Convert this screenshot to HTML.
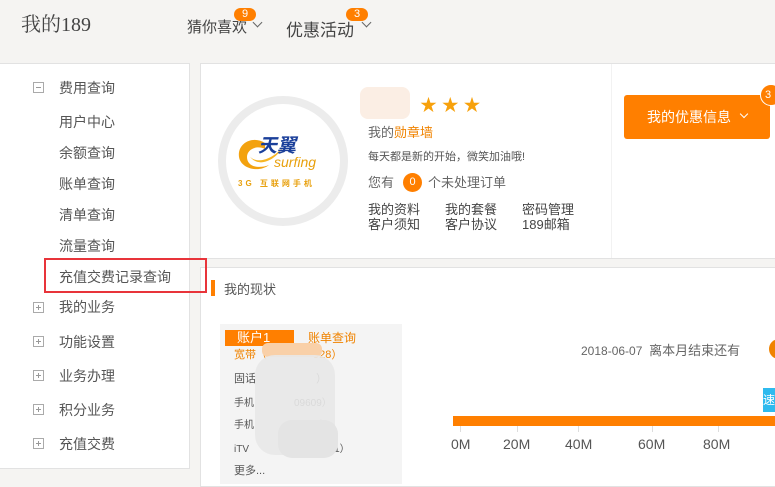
<!DOCTYPE html>
<html><head><meta charset="utf-8">
<style>
*{margin:0;padding:0;box-sizing:border-box}
body{width:775px;height:479px;overflow:hidden;background:#f5f4f2;font-family:"Liberation Sans","Noto Sans CJK SC",sans-serif;color:#555;position:relative;font-size:14px}
.a{position:absolute;white-space:nowrap}
.box{position:absolute;background:#fff;border:1px solid #e2e2e2}
.pm{position:absolute;width:11px;height:11px;border:1px solid #aaa;left:33px}
.pm:before{content:"";position:absolute;left:2px;right:2px;top:4px;height:1px;background:#999}
.pm.p:after{content:"";position:absolute;top:2px;bottom:2px;left:4px;width:1px;background:#999}
.badge{position:absolute;background:#ff7f00;color:#fff;font-size:11px;border-radius:8px;text-align:center;height:13px;line-height:13px;width:22px}
.chev{position:absolute;width:7px;height:7px;border-right:1.5px solid #666;border-bottom:1.5px solid #666;transform:rotate(45deg)}
.star{color:#f7a10c;font-size:17px}
</style></head><body>
<div class="a" style="left:21px;top:8px;font-size:20px;color:#444;font-family:'Liberation Serif','Noto Serif CJK SC',serif">我的189</div>
<div class="a" style="left:187px;top:16px;font-size:15px;color:#444">猜你喜欢</div>
<div class="badge" style="left:234px;top:8px">9</div>
<div class="chev" style="left:254px;top:19px"></div>
<div class="a" style="left:286px;top:16px;font-size:17px;color:#444">优惠活动</div>
<div class="badge" style="left:346px;top:8px">3</div>
<div class="chev" style="left:363px;top:19px"></div>

<div class="box" style="left:-1px;top:63px;width:191px;height:406px"></div>
<div class="pm" style="top:82px"></div>
<div class="a" style="left:59px;top:78px">费用查询</div>
<div class="a" style="left:59px;top:112px">用户中心</div>
<div class="a" style="left:59px;top:143px">余额查询</div>
<div class="a" style="left:59px;top:174px">账单查询</div>
<div class="a" style="left:59px;top:205px">清单查询</div>
<div class="a" style="left:59px;top:236px">流量查询</div>
<div class="a" style="left:59px;top:267px">充值交费记录查询</div>
<div class="pm p" style="top:302px"></div><div class="a" style="left:59px;top:297px">我的业务</div>
<div class="pm p" style="top:336px"></div><div class="a" style="left:59px;top:332px">功能设置</div>
<div class="pm p" style="top:370px"></div><div class="a" style="left:59px;top:366px">业务办理</div>
<div class="pm p" style="top:404px"></div><div class="a" style="left:59px;top:400px">积分业务</div>
<div class="pm p" style="top:438px"></div><div class="a" style="left:59px;top:434px">充值交费</div>

<div class="box" style="left:200px;top:63px;width:590px;height:196px"></div>
<div class="a" style="left:611px;top:64px;width:1px;height:194px;background:#f2f2f2"></div>
<div class="a" style="left:218px;top:96px;width:130px;height:130px;border-radius:50%;border:8px solid #ececec;background:#fff"></div>
<svg class="a" style="left:235px;top:135px" width="50" height="40" viewBox="0 0 50 40"><path d="M30 8C18 0 2 8 4 22c2 12 20 16 30 8-10 4-22 2-22-8 0-8 10-12 18-8z" fill="#f3a20f"/><path d="M14 20c4 8 20 8 34-8-8 14-26 22-34 8z" fill="#f7b623"/></svg>
<div class="a" style="left:258px;top:131px;font-size:19px;font-weight:bold;color:#1a3f9a;font-style:italic">天翼</div>
<div class="a" style="left:274px;top:154px;font-size:14px;color:#e8a00d;font-style:italic">surfing</div>
<div class="a" style="left:238px;top:178px;font-size:8px;color:#e8a00d;letter-spacing:3px;font-weight:bold">3G 互联网手机</div>
<div class="a" style="left:360px;top:87px;width:50px;height:32px;background:#fbeee4;border-radius:8px"></div>
<div class="a star" style="left:420px;top:91px">★ ★ ★</div>
<div class="a" style="left:368px;top:122px;font-size:13px;color:#666">我的<span style="color:#f08300">勋章墙</span></div>
<div class="a" style="left:368px;top:148px;font-size:11px;color:#555">每天都是新的开始，微笑加油哦!</div>
<div class="a" style="left:368px;top:172px;font-size:13px;color:#666">您有</div>
<div class="a" style="left:403px;top:173px;width:19px;height:19px;border-radius:50%;background:#ff7f00;color:#fff;font-size:11px;text-align:center;line-height:19px">0</div>
<div class="a" style="left:428px;top:172px;font-size:13px;color:#666">个未处理订单</div>
<div class="a" style="left:368px;top:202px;font-size:13px;color:#444;line-height:15px">我的资料<br>客户须知</div>
<div class="a" style="left:445px;top:202px;font-size:13px;color:#444;line-height:15px">我的套餐<br>客户协议</div>
<div class="a" style="left:522px;top:202px;font-size:13px;color:#444;line-height:15px">密码管理<br>189邮箱</div>
<div class="a" style="left:624px;top:95px;width:146px;height:44px;background:#ff7f00;border-radius:3px;color:#fff;font-size:14px;line-height:44px;padding-left:23px">我的优惠信息</div>
<div class="chev" style="left:741px;top:111px;border-color:#fff;width:6px;height:6px"></div>
<div class="a" style="left:760px;top:84px;width:22px;height:22px;border-radius:50%;background:#ff7f00;border:1px solid #fff;color:#fff;font-size:11px;line-height:20px;padding-left:4px">3</div>

<div class="box" style="left:200px;top:267px;width:590px;height:220px"></div>
<div class="a" style="left:44px;top:258px;width:163px;height:35px;border:2px solid #e8343a;z-index:5"></div>
<div class="a" style="left:211px;top:280px;width:4px;height:16px;background:#ff7f00"></div>
<div class="a" style="left:224px;top:279px;font-size:13px;color:#555">我的现状</div>
<div class="a" style="left:220px;top:324px;width:182px;height:160px;background:#f4f4f4"></div>
<div class="a" style="left:225px;top:330px;width:69px;height:16px;background:#ff7f00;color:#fff;font-size:13px;line-height:16px;padding-left:12px">账户1</div>
<div class="a" style="left:308px;top:329px;font-size:12px;color:#f08300">账单查询</div>
<div class="a" style="left:234px;top:346px;font-size:11px;color:#f08300">宽带（<span style="margin-left:46px">928）</span></div>
<div class="a" style="left:234px;top:370px;font-size:11px;color:#555">固话<span style="margin-left:60px">）</span></div>
<div class="a" style="left:234px;top:394px;font-size:10px;color:#555">手机<span style="margin-left:40px">09609）</span></div>
<div class="a" style="left:234px;top:416px;font-size:10px;color:#555">手机<span style="margin-left:66px">）</span></div>
<div class="a" style="left:234px;top:440px;font-size:10px;color:#555">iTV<span style="margin-left:74px">331）</span></div>
<div class="a" style="left:234px;top:462px;font-size:11px;color:#555">更多...</div>
<div class="a" style="left:262px;top:343px;width:60px;height:14px;background:#f9d0a8;border-radius:6px"></div>
<div class="a" style="left:255px;top:355px;width:80px;height:100px;background:#e8e8e8;border-radius:20px;opacity:.9"></div>
<div class="a" style="left:278px;top:420px;width:60px;height:38px;background:#e4e4e4;border-radius:14px"></div>
<div class="a" style="left:581px;top:340px;font-size:12px;color:#666">2018-06-07&nbsp; <span style="font-size:13px">离本月结束还有</span></div>
<div class="a" style="left:769px;top:339px;width:20px;height:20px;border-radius:50%;background:#f08300"></div>
<div class="a" style="left:763px;top:388px;width:15px;height:24px;background:#2ebaee;color:#fff;font-size:12px;line-height:24px">速</div>
<div class="a" style="left:453px;top:416px;width:322px;height:10px;background:#ff7f00"></div>
<div class="a" style="left:460px;top:426px;width:1px;height:6px;background:#ddd"></div>
<div class="a" style="left:517px;top:426px;width:1px;height:6px;background:#ddd"></div>
<div class="a" style="left:578px;top:426px;width:1px;height:6px;background:#ddd"></div>
<div class="a" style="left:652px;top:426px;width:1px;height:6px;background:#ddd"></div>
<div class="a" style="left:718px;top:426px;width:1px;height:6px;background:#ddd"></div>
<div class="a" style="left:451px;top:436px;font-size:14px;color:#555">0M</div>
<div class="a" style="left:503px;top:436px;font-size:14px;color:#555">20M</div>
<div class="a" style="left:565px;top:436px;font-size:14px;color:#555">40M</div>
<div class="a" style="left:638px;top:436px;font-size:14px;color:#555">60M</div>
<div class="a" style="left:703px;top:436px;font-size:14px;color:#555">80M</div>
</body></html>
